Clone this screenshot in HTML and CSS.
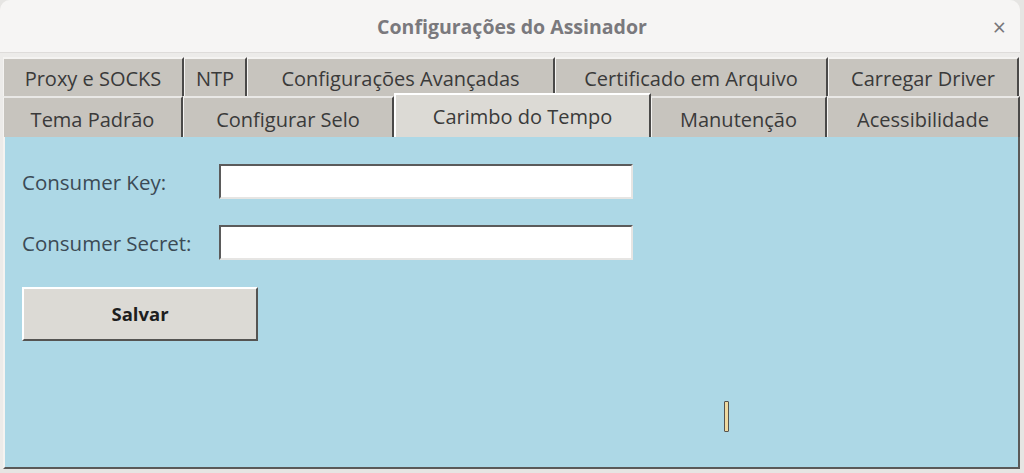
FILE: index.html
```html
<!DOCTYPE html>
<html lang="pt">
<head>
  <meta charset="UTF-8" />
  <title>Configurações do Assinador</title>
  <link rel="stylesheet" href="styles.css">
</head>
<body>
  <div class="window">
    <div class="titlebar">
      <span class="title">Configurações do Assinador</span>
      <span class="close">×</span>
    </div>

    <div class="tabs">
      <div class="tab-row row1">
        <div class="tab">Proxy e SOCKS</div>
        <div class="tab">NTP</div>
        <div class="tab">Configurações Avançadas</div>
        <div class="tab">Certificado em Arquivo</div>
        <div class="tab">Carregar Driver</div>
      </div>
      <div class="tab-row row2">
        <div class="tab">Tema Padrão</div>
        <div class="tab">Configurar Selo</div>
        <div class="tab active">Carimbo do Tempo</div>
        <div class="tab">Manutenção</div>
        <div class="tab">Acessibilidade</div>
      </div>
    </div>

    <div class="panel">
      <div class="field">
        <label>Consumer Key:</label>
        <input type="text" class="entry">
      </div>
      <div class="field">
        <label>Consumer Secret:</label>
        <input type="text" class="entry">
      </div>
      <button class="btn">Salvar</button>
      <div class="marker"></div>
    </div>
  </div>
</body>
</html>
```

FILE: styles.css
```css
body {
  margin: 0;
  background: #e6e5e3;
  font-family: "Open Sans", "DejaVu Sans", sans-serif;
  width: 1024px;
  height: 473px;
  overflow: hidden;
}

.window {
  margin: 0 4px 0 0;
  height: 469px;
  background: #ecebe9;
  border-radius: 10px 10px 0 0;
  display: flex;
  flex-direction: column;
}

.titlebar {
  height: 52px;
  background: #f6f5f4;
  border-radius: 10px 10px 0 0;
  border-bottom: 1px solid #dedcda;
  display: flex;
  align-items: center;
  justify-content: center;
  position: relative;
}

.title {
  font-size: 19.5px;
  font-weight: bold;
  color: #7a797d;
  margin-left: 4px;
}

.close {
  position: absolute;
  right: 14px;
  top: 11px;
  font-size: 23px;
  color: #77767b;
}

.tabs {
  padding: 4px 0 0 3px;
}

.tab-row {
  display: grid;
  height: 39px;
}

.row1 {
  grid-template-columns: 181px 63px 308px 273px 191px;
}

.row2 {
  grid-template-columns: 180px 211px 257px 176px 193px;
  height: 41px;
}

.tab {
  background: #c7c4be;
  border-top: 2px solid #f4f3f1;
  border-left: 1px solid #f4f3f1;
  border-right: 2px solid #4a4948;
  display: flex;
  align-items: center;
  justify-content: center;
  font-size: 20px;
  color: #3a3a3a;
  box-sizing: border-box;
  white-space: nowrap;
  padding-top: 1px;
}

.row2 .tab {
  border-top: 2px solid #e9e8e6;
  padding-top: 3px;
}

.row2 .tab.active {
  background: #dcdad5;
  margin-top: -3px;
  border-top: 2px solid #ffffff;
  border-left: 2px solid #ffffff;
  padding-top: 1px;
}

.panel {
  flex: 1;
  margin-left: 3px;
  background: #add8e6;
  border-left: 2px solid #f4f3f1;
  border-right: 2px solid #5a5958;
  border-bottom: 2px solid #5a5958;
  padding: 27px 0 0 17px;
  position: relative;
}

.field {
  display: flex;
  align-items: center;
  margin-bottom: 26px;
}

.field label {
  width: 197px;
  font-size: 20.5px;
  color: #3b4a55;
  white-space: nowrap;
}

.entry {
  width: 414px;
  height: 35px;
  box-sizing: border-box;
  background: #ffffff;
  border-top: 2px solid #5b5b5b;
  border-left: 2px solid #5b5b5b;
  border-right: 2px solid #e6e5e3;
  border-bottom: 2px solid #e6e5e3;
  outline: none;
}

.btn {
  margin-top: 1px;
  width: 236px;
  height: 54px;
  background: #dcdad5;
  border-top: 2px solid #ffffff;
  border-left: 2px solid #ffffff;
  border-right: 2px solid #555452;
  border-bottom: 2px solid #555452;
  font-family: "Open Sans", "DejaVu Sans", sans-serif;
  font-size: 18.5px;
  font-weight: bold;
  color: #1e1e1e;
  padding-bottom: 3px;
}

.marker {
  position: absolute;
  left: 719px;
  top: 264px;
  width: 3px;
  height: 29px;
  background: #efd9a0;
  border: 1px solid #55534f;
  border-radius: 1px;
}
```
